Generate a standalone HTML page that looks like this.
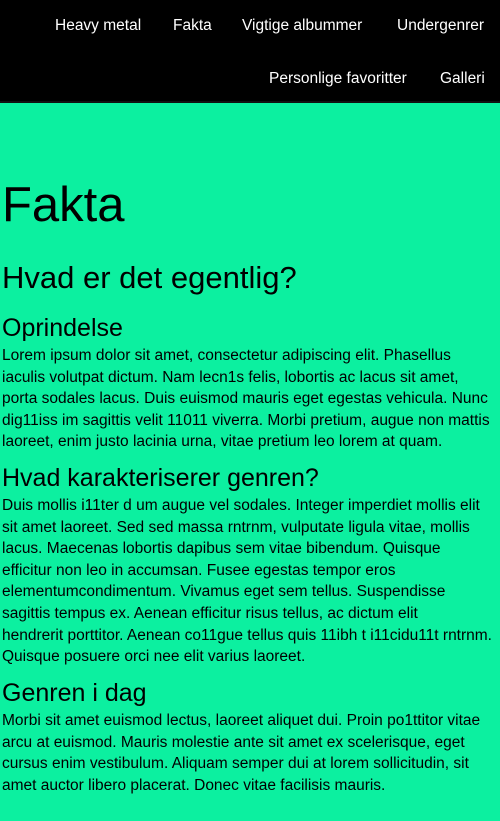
<!DOCTYPE html>
<html><head><meta charset="utf-8"><style>
*{margin:0;padding:0;box-sizing:border-box}
body{width:500px;height:821px;background:#0cf0a0;font-family:"Liberation Sans",sans-serif;color:#000;overflow:hidden;position:relative}
nav{position:absolute;left:0;top:0;width:500px;height:103px;background:#000;border-bottom:2px solid #111}
nav span{position:absolute;color:#fff;font-size:15.5px;line-height:18px;white-space:nowrap}
.a{position:absolute;left:2px;white-space:nowrap}
h1{font-weight:normal;font-size:49px;line-height:54px}
h2{font-weight:normal;font-size:31px;line-height:34px}
h3{font-weight:normal;font-size:25px;line-height:28px}
.l{font-size:15.5px;line-height:21.6px}
</style></head><body>
<nav>
<span style="left:55px;top:17px">Heavy metal</span>
<span style="left:173px;top:17px">Fakta</span>
<span style="left:242px;top:17px">Vigtige albummer</span>
<span style="left:397px;top:17px">Undergenrer</span>
<span style="left:269px;top:70px">Personlige favoritter</span>
<span style="left:440px;top:70px">Galleri</span>
</nav>
<h1 class="a" style="top:178px">Fakta</h1>
<h2 class="a" style="top:261px">Hvad er det egentlig?</h2>
<h3 class="a" style="top:314px">Oprindelse</h3>
<div class="a l" style="top:345px">Lorem ipsum dolor sit amet, consectetur adipiscing elit. Phasellus<br>iaculis volutpat dictum. Nam lecn1s felis, lobortis ac lacus sit amet,<br>porta sodales lacus. Duis euismod mauris eget egestas vehicula. Nunc<br>dig11iss im sagittis velit 11011 viverra. Morbi pretium, augue non mattis<br>laoreet, enim justo lacinia urna, vitae pretium leo lorem at quam.</div>
<h3 class="a" style="top:464px">Hvad karakteriserer genren?</h3>
<div class="a l" style="top:495px">Duis mollis i11ter d um augue vel sodales. Integer imperdiet mollis elit<br>sit amet laoreet. Sed sed massa rntrnm, vulputate ligula vitae, mollis<br>lacus. Maecenas lobortis dapibus sem vitae bibendum. Quisque<br>efficitur non leo in accumsan. Fusee egestas tempor eros<br>elementumcondimentum. Vivamus eget sem tellus. Suspendisse<br>sagittis tempus ex. Aenean efficitur risus tellus, ac dictum elit<br>hendrerit porttitor. Aenean co11gue tellus quis 11ibh t i11cidu11t rntrnm.<br>Quisque posuere orci nee elit varius laoreet.</div>
<h3 class="a" style="top:679px">Genren i dag</h3>
<div class="a l" style="top:710px">Morbi sit amet euismod lectus, laoreet aliquet dui. Proin po1ttitor vitae<br>arcu at euismod. Mauris molestie ante sit amet ex scelerisque, eget<br>cursus enim vestibulum. Aliquam semper dui at lorem sollicitudin, sit<br>amet auctor libero placerat. Donec vitae facilisis mauris.</div>
</body></html>
